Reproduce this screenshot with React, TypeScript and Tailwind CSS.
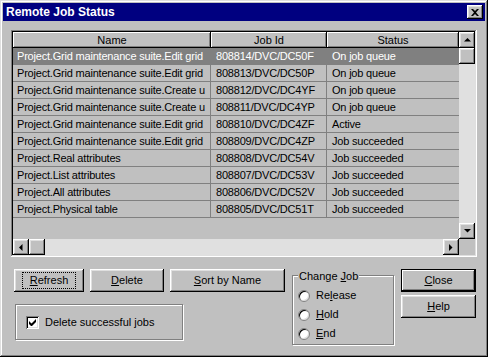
const rows = [
  ['Project.Grid maintenance suite.Edit grid', '808814/DVC/DC50F', 'On job queue'],
  ['Project.Grid maintenance suite.Edit grid', '808813/DVC/DC50P', 'On job queue'],
  ['Project.Grid maintenance suite.Create u', '808812/DVC/DC4YF', 'On job queue'],
  ['Project.Grid maintenance suite.Create u', '808811/DVC/DC4YP', 'On job queue'],
  ['Project.Grid maintenance suite.Edit grid', '808810/DVC/DC4ZF', 'Active'],
  ['Project.Grid maintenance suite.Edit grid', '808809/DVC/DC4ZP', 'Job succeeded'],
  ['Project.Real attributes', '808808/DVC/DC54V', 'Job succeeded'],
  ['Project.List attributes', '808807/DVC/DC53V', 'Job succeeded'],
  ['Project.All attributes', '808806/DVC/DC52V', 'Job succeeded'],
  ['Project.Physical table', '808805/DVC/DC51T', 'Job succeeded'],
];

const raised =
  'shadow-[inset_-1px_-1px_#000,inset_1px_1px_#fff,inset_-2px_-2px_#808080,inset_2px_2px_#dfdfdf]';

function Arrow({ dir }: { dir: 'up' | 'down' | 'left' | 'right' }) {
  const pts = {
    up: '3.5,0 0,3.5 7,3.5',
    down: '0,0 7,0 3.5,3.5',
    left: '3.5,0 3.5,7 0,3.5',
    right: '0,0 0,7 3.5,3.5',
  }[dir];
  const vert = dir === 'up' || dir === 'down';
  return (
    <svg width={vert ? 7 : 4} height={vert ? 4 : 7} viewBox={vert ? '0 0 7 4' : '0 0 4 7'}>
      <polygon points={pts} fill="#000" />
    </svg>
  );
}

function ScrollBtn({ dir }: { dir: 'up' | 'down' | 'left' | 'right' }) {
  return (
    <div className={`w-[16px] h-[16px] shrink-0 bg-[#c0c0c0] flex items-center justify-center ${raised}`}>
      <Arrow dir={dir} />
    </div>
  );
}

function Btn({ children, w, isDefault, focus }: { children: React.ReactNode; w: string; isDefault?: boolean; focus?: boolean }) {
  return (
    <div
      className={`${w} h-[23px] bg-[#c0c0c0] flex items-center justify-center ${
        isDefault
          ? 'border border-black shadow-[inset_-1px_-1px_#000,inset_1px_1px_#fff,inset_-2px_-2px_#808080]'
          : raised
      }`}
    >
      <span
        className={`px-[6px] leading-[13px] ${focus ? 'outline outline-1 outline-dotted outline-black outline-offset-[1px]' : ''}`}
      >
        {children}
      </span>
    </div>
  );
}

function Radio({ children }: { children: React.ReactNode }) {
  return (
    <div className="flex items-center gap-[6px] h-[19px]">
      <div className="w-[12px] h-[12px] rounded-full bg-white border border-[#808080] shadow-[inset_1px_1px_#000,inset_-1px_-1px_#dfdfdf]" />
      <span>{children}</span>
    </div>
  );
}

export default function App() {
  return (
    <div
      className="w-[488px] h-[357px] bg-[#c0c0c0] p-[3px] flex flex-col text-[11px] text-black shadow-[inset_-1px_-1px_#000,inset_1px_1px_#dfdfdf,inset_-2px_-2px_#808080,inset_2px_2px_#fff]"
      style={{ fontFamily: '"Liberation Sans", Arial, sans-serif' }}
    >
      {/* title bar */}
      <div className="h-[18px] bg-[#000080] flex items-center justify-between pl-[3px] pr-[2px]">
        <span className="text-white font-bold text-[12px]">Remote Job Status</span>
        <div className={`w-[16px] h-[14px] bg-[#c0c0c0] flex items-center justify-center ${raised}`}>
          <svg width="8" height="7" viewBox="0 0 8 7">
            <path d="M0 0h2l2 2 2-2h2L5 3.5 8 7H6L4 5 2 7H0l3-3.5z" fill="#000" />
          </svg>
        </div>
      </div>

      {/* list view */}
      <div className="ml-[8px] mt-[9px] w-[466px] h-[227px] p-[2px] shadow-[inset_-1px_-1px_#fff,inset_1px_1px_#808080,inset_-2px_-2px_#dfdfdf,inset_2px_2px_#000]">
        <div className="flex">
          <div className="w-[446px] flex flex-col">
            <div className="flex h-[16px]">
              {['Name', 'Job Id', 'Status'].map((h, i) => (
                <div
                  key={h}
                  className={`${['w-[198px]', 'w-[116px]', 'w-[132px]'][i]} h-[16px] flex items-center justify-center bg-[#c0c0c0] shadow-[inset_-1px_-1px_#000,inset_1px_1px_#fff,inset_-2px_-2px_#808080]`}
                >
                  {h}
                </div>
              ))}
            </div>
            <div className="h-[191px] tracking-[-0.2px]">
              {rows.map((r, i) => (
                <div
                  key={i}
                  className={`flex h-[17px] border-b border-[#808080] ${i === 0 ? 'bg-[#808080] text-white' : ''}`}
                >
                  <div className="w-[198px] pl-[4px] border-r border-[#808080] whitespace-nowrap overflow-hidden leading-[16px]">
                    {r[0]}
                  </div>
                  <div className="w-[116px] pl-[5px] border-r border-[#808080] whitespace-nowrap overflow-hidden leading-[16px]">
                    {r[1]}
                  </div>
                  <div className="w-[132px] pl-[5px] whitespace-nowrap overflow-hidden leading-[16px]">{r[2]}</div>
                </div>
              ))}
            </div>
          </div>
          <div className="w-[16px] h-[207px] flex flex-col bg-[#e0e0e0]">
            <ScrollBtn dir="up" />
            <div className={`w-[16px] h-[16px] bg-[#c0c0c0] ${raised}`} />
            <div className="flex-1" />
            <ScrollBtn dir="down" />
          </div>
        </div>
        <div className="flex h-[16px]">
          <div className="w-[446px] flex bg-[#e0e0e0]">
            <ScrollBtn dir="left" />
            <div className={`w-[16px] h-[16px] bg-[#c0c0c0] ${raised}`} />
            <div className="flex-1" />
            <ScrollBtn dir="right" />
          </div>
          <div className="w-[16px] bg-[#c0c0c0]" />
        </div>
      </div>

      {/* bottom controls */}
      <div className="flex mt-[12px] ml-[11px]">
        <div className="flex flex-col">
          <div className="flex gap-[6px]">
            <Btn w="w-[70px]" focus>
              <u>R</u>efresh
            </Btn>
            <Btn w="w-[74px]">
              <u>D</u>elete
            </Btn>
            <Btn w="w-[115px]">
              <u>S</u>ort by Name
            </Btn>
          </div>
          <div className="mt-[12px] ml-[1px] w-[168px] h-[36px] border border-[#808080] shadow-[inset_1px_1px_#fff,1px_1px_#fff] flex items-center pl-[10px] gap-[6px]">
            <div className="w-[13px] h-[13px] bg-white shadow-[inset_1px_1px_#808080,inset_-1px_-1px_#fff,inset_2px_2px_#000,inset_-2px_-2px_#dfdfdf] flex items-center justify-center">
              <svg width="7" height="7" viewBox="0 0 7 7">
                <path d="M0 2v3l2 2h1l4-4V0L2.5 4.5z" fill="#000" />
              </svg>
            </div>
            <span>Delete successful jobs</span>
          </div>
        </div>
        <div className="ml-[7px] mt-[6px] w-[102px] h-[70px] relative border border-[#808080] shadow-[inset_1px_1px_#fff,1px_1px_#fff] pl-[5px] pt-[10px]">
          <span className="absolute -top-[8px] left-[5px] bg-[#c0c0c0] px-[1px]">
            Change <u>J</u>ob
          </span>
          <Radio>
            Re<u>l</u>ease
          </Radio>
          <Radio>
            <u>H</u>old
          </Radio>
          <Radio>
            <u>E</u>nd
          </Radio>
        </div>
        <div className="ml-[7px] flex flex-col gap-[3px]">
          <Btn w="w-[75px]" isDefault>
            <u>C</u>lose
          </Btn>
          <Btn w="w-[75px]">
            <u>H</u>elp
          </Btn>
        </div>
      </div>
    </div>
  );
}
